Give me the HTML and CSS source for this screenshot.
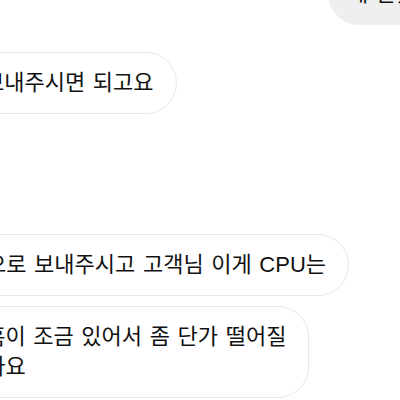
FILE: index.html
```html
<!DOCTYPE html>
<html>
  <head>
    <meta charset="utf-8">
    <title>chat</title>
    <link rel="stylesheet" href="styles.css">
  </head>
  <body>
    <div class="thread">

      <div class="row mine">
        <div class="bubble sent">네 알겠습니다</div>
      </div>

      <div class="row theirs first">
        <div class="bubble recv b1">보내주시면 되고요</div>
      </div>

      <div class="row theirs gap">
        <div class="bubble recv b2">으로 보내주시고 고객님 이게 CPU는</div>
      </div>

      <div class="row theirs next">
        <div class="bubble recv b3">네 그리고 흠이 조금 있어서 좀 단가 떨어질<br>있을 것 같아요</div>
      </div>

    </div>
  </body>
</html>
```

FILE: styles.css
```css
html, body {
  margin: 0;
  width: 400px;
  height: 400px;
  overflow: hidden;
  background: #fff;
}
body {
  font-family: "Liberation Sans", "Noto Sans CJK KR", sans-serif;
  font-size: 22px;
  color: #111;
}
.thread {
  display: flex;
  flex-direction: column;
}
.row {
  display: flex;
}
.row.mine {
  justify-content: flex-end;
  margin-top: -37px;
}
.row.first {
  margin-top: 27px;
}
.row.gap {
  margin-top: 120px;
}
.row.next {
  margin-top: 10px;
}
.bubble {
  white-space: nowrap;
  line-height: 30px;
  padding: 15px 22px 15px 20px;
  border-radius: 31px;
  word-spacing: 1.5px;
  flex: none;
}
.bubble.sent {
  background: #efefef;
  padding: 16px 20px;
  margin-right: -97px;
}
.bubble.recv {
  background: #fff;
  border: 1.5px solid #e8e8e8;
}
.b1 {
  margin-left: -37px;
}
.b2 {
  margin-left: -35px;
}
.b3 {
  margin-left: -132px;
}
```
